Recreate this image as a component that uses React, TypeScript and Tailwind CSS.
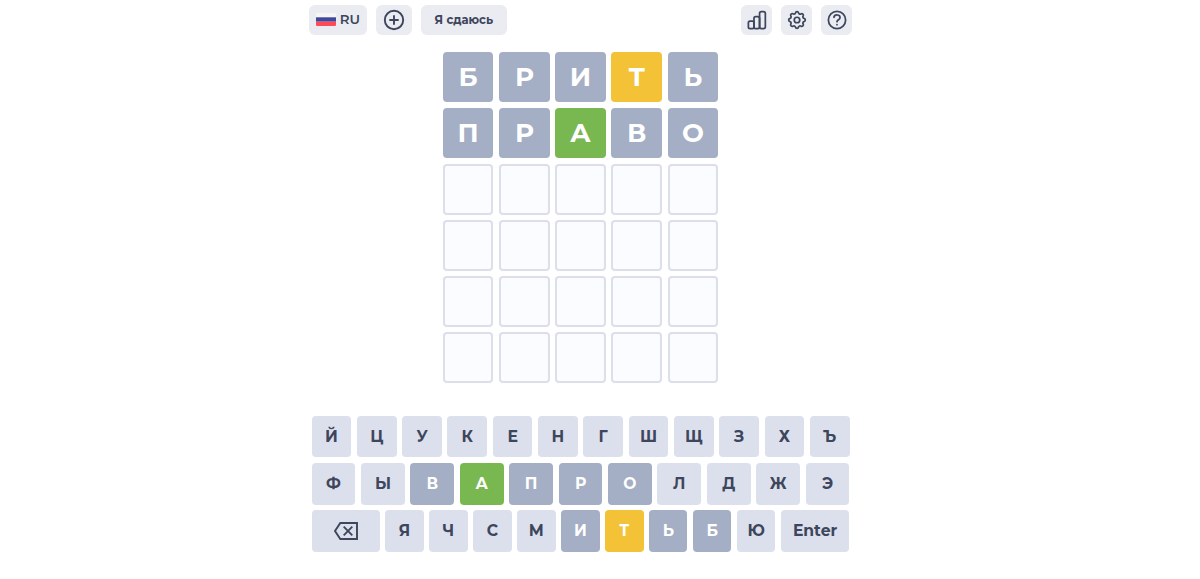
import React from "react";
import clsx from "clsx";

type Status = "absent" | "present" | "correct";

const guesses = ["БРИТЬ", "ПРАВО"];
const marks: Status[][] = [
  ["absent", "absent", "absent", "present", "absent"],
  ["absent", "absent", "correct", "absent", "absent"],
];

const keyRows = ["ЙЦУКЕНГШЩЗХЪ", "ФЫВАПРОЛДЖЭ", "ЯЧСМИТЬБЮ"];

const used: Record<string, Status> = {
  В: "absent",
  А: "correct",
  П: "absent",
  Р: "absent",
  О: "absent",
  И: "absent",
  Т: "present",
  Ь: "absent",
  Б: "absent",
};

const statusColors = {
  absent: "bg-[#a4aec4] text-white",
  present: "bg-[#f3c237] text-white",
  correct: "bg-[#79b851] text-white",
};

const headerButton = "flex h-[30.4px] items-center justify-center rounded-[6px] bg-[#ebecf2]";
const keyButton = "flex h-[41.8px] min-w-0 items-center justify-center rounded-[4px] pt-px text-[15.6px] leading-none font-bold";

function Icon({ children, size = 22 }: { children: React.ReactNode; size?: number }) {
  return (
    <svg
      width={size}
      height={size}
      viewBox="0 0 24 24"
      fill="none"
      stroke="currentColor"
      strokeWidth="1.9"
      strokeLinecap="round"
      strokeLinejoin="round"
      className="shrink-0"
    >
      {children}
    </svg>
  );
}

function Header() {
  return (
    <header className="flex justify-between">
      <div className="flex gap-[9px]">
        <button className={clsx(headerButton, "w-[58px] gap-[4px] text-[13.3px] font-semibold")}>
          <svg width="20" height="13" viewBox="0 0 20 13">
            <rect width="20" height="13" rx="1" fill="#f5f5f5" />
            <path d="M0 4.3h20v4.4H0z" fill="#41479b" />
            <path d="M0 8.7h20V12a1 1 0 0 1-1 1H1a1 1 0 0 1-1-1z" fill="#ff4b55" />
          </svg>
          RU
        </button>
        <button className={clsx(headerButton, "w-9")}>
          <Icon size={24}>
            <circle cx="12" cy="12" r="9.2" />
            <path d="M8 12h8M12 8v8" />
          </Icon>
        </button>
        <button className={clsx(headerButton, "w-[86px] pt-px text-[11.7px] font-bold")}>Я сдаюсь</button>
      </div>
      <div className="flex gap-[9px]">
        <button className={clsx(headerButton, "w-[31px]")}>
          <Icon>
            <rect x="2.6" y="13.2" width="6.1" height="8.2" rx="1.8" />
            <rect x="8.7" y="8.2" width="6.1" height="13.2" rx="1.8" />
            <rect x="14.8" y="2.8" width="6.3" height="18.6" rx="2" />
          </Icon>
        </button>
        <button className={clsx(headerButton, "w-[31px]")}>
          <Icon>
            <path d="M10.3 4.3c.4-1.8 3-1.8 3.4 0a1.7 1.7 0 0 0 2.6 1.1c1.5-1 3.3.8 2.4 2.3a1.7 1.7 0 0 0 1 2.6c1.8.4 1.8 3 0 3.4a1.7 1.7 0 0 0-1 2.6c.9 1.5-.9 3.3-2.4 2.4a1.7 1.7 0 0 0-2.6 1c-.4 1.8-3 1.8-3.4 0a1.7 1.7 0 0 0-2.6-1c-1.5.9-3.3-.9-2.4-2.4a1.7 1.7 0 0 0-1-2.6c-1.8-.4-1.8-3 0-3.4a1.7 1.7 0 0 0 1-2.6c-.9-1.5.9-3.3 2.4-2.4a1.7 1.7 0 0 0 2.6-1z" />
            <circle cx="12" cy="12" r="3" />
          </Icon>
        </button>
        <button className={clsx(headerButton, "w-[31px]")}>
          <Icon>
            <circle cx="12" cy="12" r="9.4" />
            <path d="M8.6 9c.8-3.7 7-3 6.7.5-.2 2.2-3.3 2.3-3.3 4.4M12 17v.1" />
          </Icon>
        </button>
      </div>
    </header>
  );
}

function Board() {
  return (
    <div className="mx-auto mt-[16.7px] grid h-[331.4px] w-[275.4px] grid-cols-5 grid-rows-6 gap-[5.6px]">
      {Array.from({ length: 30 }, (_, i) => {
        const row = Math.floor(i / 5);
        const letter = guesses[row]?.[i % 5];
        return (
          <div
            key={i}
            className={clsx(
              "flex items-center justify-center rounded-[4px] text-[26px] leading-none font-bold",
              letter ? statusColors[marks[row][i % 5]] : "border-2 border-[#dcdfea] bg-[#fbfcff]"
            )}
          >
            {letter}
          </div>
        );
      })}
    </div>
  );
}

function Keyboard() {
  return (
    <div className="mt-[32.6px] flex flex-col gap-[5.3px] pr-[2.7px] pl-[2.8px]">
      {keyRows.map((row, i) => (
        <div key={row} className={clsx("flex gap-[5.6px]", i === 2 && "pr-[0.5px]")}>
          {i === 2 && (
            <button aria-label="Backspace" className={clsx(keyButton, "w-[68px] shrink-0 bg-[#dce0ec]")}>
              <svg width="24" height="18" viewBox="0 0 24 18" fill="none" stroke="currentColor" strokeWidth="1.9">
                <path d="M6.3 1H23v16H6.3L1 9z" />
                <path d="m9.7 4.7 8.6 8.6m0-8.6-8.6 8.6" />
              </svg>
            </button>
          )}
          {row.split("").map((letter) => (
            <button
              key={letter}
              className={clsx(keyButton, "flex-1", used[letter] ? statusColors[used[letter]] : "bg-[#dce0ec]")}
            >
              {letter}
            </button>
          ))}
          {i === 2 && <button className={clsx(keyButton, "w-[68px] shrink-0 bg-[#dce0ec]")}>Enter</button>}
        </div>
      ))}
    </div>
  );
}

export default function App() {
  return (
    <div className="h-[579px] overflow-hidden bg-white pl-[308.8px] font-['Montserrat','Inter',sans-serif] text-[#3d465c]">
      <main className="w-[543.4px] pt-[4.6px]">
        <Header />
        <Board />
        <Keyboard />
      </main>
    </div>
  );
}
